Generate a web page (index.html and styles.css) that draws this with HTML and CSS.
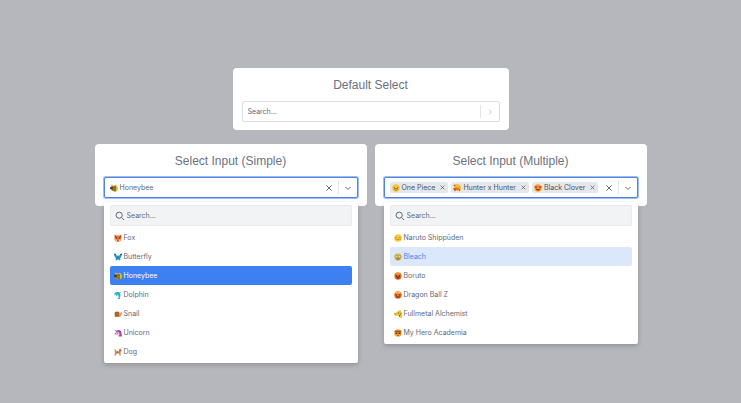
FILE: index.html
```html
<!DOCTYPE html>
<html lang="en">
<head>
  <meta charset="UTF-8">
  <meta name="viewport" content="width=device-width, initial-scale=1.0">
  <title>Select Inputs</title>
  <link rel="stylesheet" href="styles.css">
</head>
<body>
  <!-- Icons -->
  <svg class="sprite" aria-hidden="true">
    <symbol id="chevron" viewBox="0 0 10 10"><path d="M2.5 4 5 6.5 7.5 4" /></symbol>
    <symbol id="close" viewBox="0 0 10 10"><path d="M2.3 2.3 7.7 7.7M7.7 2.3 2.3 7.7" /></symbol>
    <symbol id="search" viewBox="0 0 10 10"><circle cx="4.2" cy="4.2" r="3.1" /><path d="M6.5 6.5 9 9" /></symbol>

    <symbol id="fox" viewBox="0 0 16 16">
      <path fill="#e8742c" d="M1 1 5 3h6l4-2v8l-1 5-6 2-6-2-1-5z" />
      <path fill="#a9441a" d="M2 3l3 2-3 3zM14 3l-3 2 3 3z" />
      <path fill="#ffd3a2" d="M2 11l4 0 2 3-4 1zM14 11l-4 0-2 3 4 1z" />
      <path fill="#37251f" d="M4 7h2v2H4zM10 7h2v2h-2zM7 12h2v2H7z" />
    </symbol>
    <symbol id="butterfly" viewBox="0 0 16 16">
      <path fill="#1c9fd0" d="M8 8 2 1 0 2l2 7 2 1-1 4 3 1 2-5 2 5 3-1-1-4 2-1 2-7-2-1z" />
      <path fill="#17557a" d="M7 5h2v8H7zM0 2l2-1 2 3-2 1zM16 2l-2-1-2 3 2 1z" />
    </symbol>
    <symbol id="bee" viewBox="0 0 16 16">
      <path fill="#b9b9a5" d="M5 7 1 1l5 1 3 5zM9 6l1-5 4 2-2 4z" />
      <ellipse cx="9" cy="9" rx="7" ry="6" fill="#e2b92c" />
      <path fill="#3c3422" d="M5 5l2-1v10l-2-1zM9 4h2v11H9z" />
      <circle cx="3" cy="8" r="3" fill="#4a3d20" />
    </symbol>
    <symbol id="dolphin" viewBox="0 0 16 16">
      <path fill="#2ab5bb" d="M0 7c2-5 7-6 10-4l4-1-2 3c2 3 1 6-1 8l2 3H7l2-3c1-3 0-4-2-5l-3 3V8z" />
      <path fill="#a5e3df" d="M1 7l5-1-2 2z" />
    </symbol>
    <symbol id="snail" viewBox="0 0 16 16">
      <path fill="#d99b50" d="M1 12h9l2-4-1-5h1l2 4 1-4h1l-1 7-3 4H1z" />
      <circle cx="6" cy="8" r="5" fill="#985526" />
      <circle cx="6" cy="8" r="2.5" fill="none" stroke="#d39255" />
    </symbol>
    <symbol id="unicorn" viewBox="0 0 16 16">
      <path fill="#a747ac" d="M4 4c5-4 11-2 11 4l1 7H9l2-5-6 1z" />
      <path fill="#e3c3e3" d="M5 5l4 1 2 3-1 5H7l1-4-5 2-2-2z" />
      <path fill="#a947ac" d="M0 1l6 3-1 2zM6 7h2v2H6zM1 10l3-3 1 1-3 3z" />
    </symbol>
    <symbol id="dog" viewBox="0 0 16 16">
      <path fill="#cf8b58" d="M1 1l3 3 1 3h5l1-5 2-1 3 4-2 2-1 4 1 4h-3l-1-4H5l-1 4H1l1-6z" />
      <path fill="#7b4526" d="M11 2l2 3-2 2zM5 7h4v2H5z" />
    </symbol>

    <symbol id="smile" viewBox="0 0 16 16">
      <circle cx="8" cy="8" r="7.5" fill="#f9c52e" />
      <path fill="#7c4317" d="M3 6h3v1H3zM10 6h3v1h-3zM4 9h8c0 5-8 5-8 0z" />
      <path fill="#fff" d="M5 10h6v1H5z" />
    </symbol>
    <symbol id="hearts" viewBox="0 0 16 16">
      <circle cx="9" cy="7" r="7" fill="#f9bd30" />
      <path fill="#7c4317" d="M5 6h2v1H5zM11 6h2v1h-2zM6 9h6c-1 3-5 3-6 0z" />
      <path fill="#e93f31" d="M0 9l2-1 2 1 2-1 1 2-3 5zM11 11l3-1 1 2-2 3zM1 2l3-1 1 2-2 2z" />
    </symbol>
    <symbol id="heart-eyes" viewBox="0 0 16 16">
      <circle cx="8" cy="8" r="7.5" fill="#f8a227" />
      <path fill="#dc3426" d="M1 4l3 1 3-1-1 4-2 1-2-2zM9 4l3 1 3-1-1 3-2 2-2-1z" />
      <path fill="#7c3517" d="M4 10h8c-1 4-7 4-8 0z" />
    </symbol>
    <symbol id="calm" viewBox="0 0 16 16">
      <circle cx="8" cy="8" r="7.5" fill="#f8ca36" />
      <path fill="#8b561c" d="M3 6h3v1H3zM10 6h3v1h-3zM6 11h4v1H6z" />
      <path fill="#ed9c28" d="M2 9h3v3H2zM11 9h3v3h-3z" />
    </symbol>
    <symbol id="nerd" viewBox="0 0 16 16">
      <circle cx="8" cy="8" r="7.5" fill="#e9bd43" />
      <g fill="#eee6bd" stroke="#66644a"><circle cx="5" cy="7" r="2.5" /><circle cx="11" cy="7" r="2.5" /></g>
      <path fill="#704a1c" d="M5 11h6v2H5z" />
    </symbol>
    <symbol id="angry" viewBox="0 0 16 16">
      <circle cx="8" cy="8" r="7.5" fill="#f28d2b" />
      <path fill="#d93a24" d="M2 8h12l-2 5-4 2-4-2z" />
      <path fill="#672b18" d="M3 5l4 2-1 2H4zM13 5L9 7l1 2h2zM6 11h4v2H6z" />
    </symbol>
    <symbol id="blown" viewBox="0 0 16 16">
      <circle cx="8" cy="8" r="7.5" fill="#ec6e2a" />
      <path fill="#f7bd3c" d="M2 4l3 2 3-2 3 2 3-2-2-3H4z" />
      <path fill="#6a2418" d="M3 7h3v2H3zM10 7h3v2h-3zM4 11h8v2H4z" />
    </symbol>
    <symbol id="party" viewBox="0 0 16 16">
      <path fill="#edc231" d="M0 6l5-1 4-4h5l2 5v9l-4 1-4-5-5 1z" />
      <path fill="#7c5a1b" d="M8 5h2v2H8zM12 7h2v2h-2zM10 10h2v3h-2z" />
      <path fill="#a9b740" d="M0 7l4-1 1 3-4 1z" />
    </symbol>
    <symbol id="cowboy" viewBox="0 0 16 16">
      <circle cx="8" cy="8" r="7.5" fill="#f5a52e" />
      <path fill="#a64d1e" d="M1 4l4-1 3 1 3-1 4 1-2 2H3z" />
      <path fill="#5e3016" d="M3 7h4v3H3zM9 7h4v3H9zM6 12h4v1H6z" />
    </symbol>
  </svg>

  <main class="demo">
    <section class="card card-default">
      <label class="card-title" for="defaultSelect">Default Select</label>
      <div class="control">
        <select id="defaultSelect" class="native-select">
          <option>Search...</option>
        </select>
        <span class="divider"></span>
        <svg class="icon icon-right"><use href="#chevron" /></svg>
      </div>
    </section>

    <div class="row">
      <section class="card">
        <h2 class="card-title" id="simpleTitle">Select Input (Simple)</h2>
        <div class="select">
          <div class="control focused">
            <div class="value"><svg class="emoji"><use href="#bee" /></svg>Honeybee</div>
            <button class="clear" type="button" aria-label="Clear"><svg class="icon"><use href="#close" /></svg></button>
            <span class="divider"></span>
            <button class="toggle" type="button" aria-label="Toggle options" aria-expanded="true"><svg class="icon"><use href="#chevron" /></svg></button>
          </div>
          <div class="menu">
            <label class="search">
              <svg class="icon"><use href="#search" /></svg>
              <input type="text" placeholder="Search..." aria-label="Search animals">
            </label>
            <ul class="options" role="listbox" aria-labelledby="simpleTitle">
              <li class="option" role="option"><svg class="emoji"><use href="#fox" /></svg>Fox</li>
              <li class="option" role="option"><svg class="emoji"><use href="#butterfly" /></svg>Butterfly</li>
              <li class="option selected" role="option" aria-selected="true"><svg class="emoji"><use href="#bee" /></svg>Honeybee</li>
              <li class="option" role="option"><svg class="emoji"><use href="#dolphin" /></svg>Dolphin</li>
              <li class="option" role="option"><svg class="emoji"><use href="#snail" /></svg>Snail</li>
              <li class="option" role="option"><svg class="emoji"><use href="#unicorn" /></svg>Unicorn</li>
              <li class="option" role="option"><svg class="emoji"><use href="#dog" /></svg>Dog</li>
            </ul>
          </div>
        </div>
      </section>

      <section class="card">
        <h2 class="card-title" id="multipleTitle">Select Input (Multiple)</h2>
        <div class="select">
          <div class="control focused">
            <div class="value">
              <span class="tag"><svg class="emoji"><use href="#smile" /></svg>One Piece<button class="tag-remove" type="button" aria-label="Remove One Piece"><svg class="icon"><use href="#close" /></svg></button></span>
              <span class="tag"><svg class="emoji"><use href="#hearts" /></svg>Hunter x Hunter<button class="tag-remove" type="button" aria-label="Remove Hunter x Hunter"><svg class="icon"><use href="#close" /></svg></button></span>
              <span class="tag"><svg class="emoji"><use href="#heart-eyes" /></svg>Black Clover<button class="tag-remove" type="button" aria-label="Remove Black Clover"><svg class="icon"><use href="#close" /></svg></button></span>
            </div>
            <button class="clear" type="button" aria-label="Clear all"><svg class="icon"><use href="#close" /></svg></button>
            <span class="divider"></span>
            <button class="toggle" type="button" aria-label="Toggle options" aria-expanded="true"><svg class="icon"><use href="#chevron" /></svg></button>
          </div>
          <div class="menu">
            <label class="search">
              <svg class="icon"><use href="#search" /></svg>
              <input type="text" placeholder="Search..." aria-label="Search anime">
            </label>
            <ul class="options" role="listbox" aria-labelledby="multipleTitle" aria-multiselectable="true">
              <li class="option" role="option"><svg class="emoji"><use href="#calm" /></svg>Naruto Shippūden</li>
              <li class="option active" role="option"><svg class="emoji"><use href="#nerd" /></svg>Bleach</li>
              <li class="option" role="option"><svg class="emoji"><use href="#angry" /></svg>Boruto</li>
              <li class="option" role="option"><svg class="emoji"><use href="#blown" /></svg>Dragon Ball Z</li>
              <li class="option" role="option"><svg class="emoji"><use href="#party" /></svg>Fullmetal Alchemist</li>
              <li class="option" role="option"><svg class="emoji"><use href="#cowboy" /></svg>My Hero Academia</li>
            </ul>
          </div>
        </div>
      </section>
    </div>
  </main>
</body>
</html>
```

FILE: styles.css
```css
* {
  box-sizing: border-box;
}

body {
  margin: 0;
  padding: 68px 16px 16px;
  min-height: 100vh;
  background-color: #b6b7bc;
  color: #5f6877;
  font-family: Inter, "Noto Sans", sans-serif;
  font-size: 7px;
  line-height: 11px;
}

.sprite {
  position: absolute;
  width: 0;
  height: 0;
}

.demo {
  display: flex;
  flex-direction: column;
  align-items: center;
  gap: 14px;
  max-width: 552px;
  margin: 0 auto;
}

.row {
  display: flex;
  gap: 8px;
  width: 100%;
}

.card {
  flex: 1;
  min-width: 0;
  padding: 9px 9px 8px;
  background-color: #ffffff;
  border-radius: 4px;
}

.card-default {
  width: 50%;
}

.card-title {
  display: block;
  margin: 0 0 7px;
  color: #6b7280;
  font-family: "Liberation Sans", Arial, sans-serif;
  font-size: 12px;
  font-weight: 400;
  line-height: 17px;
  text-align: center;
}

/* Select box */
.select {
  position: relative;
}

.control {
  display: flex;
  align-items: center;
  height: 21px;
  padding-right: 4px;
  border: 1px solid #dcdee2;
  border-radius: 2px;
  background-color: #ffffff;
}

.control.focused {
  border-color: #5185dc;
  box-shadow: 0 0 0 1px #9dbdf3;
}

.native-select {
  flex: 1;
  height: 100%;
  padding: 0 5px;
  border: none;
  outline: none;
  appearance: none;
  background: none;
  color: inherit;
  font: inherit;
}

.value {
  display: flex;
  flex: 1;
  align-items: center;
  min-width: 0;
  padding-left: 5px;
  white-space: nowrap;
}

.divider {
  width: 1px;
  height: 13px;
  margin: 0 4px;
  background-color: #e2e4e8;
}

button {
  display: flex;
  padding: 0;
  border: none;
  background: none;
  color: inherit;
  cursor: pointer;
}

.icon {
  flex: none;
  width: 10px;
  height: 10px;
  fill: none;
  stroke: currentColor;
  stroke-width: 1;
}

.icon-right {
  color: #cdd0d6;
  transform: rotate(-90deg);
}

.emoji {
  flex: none;
  width: 8px;
  height: 8px;
  margin-right: 2px;
}

/* Selected values */
.tag {
  display: flex;
  align-items: center;
  margin-right: 3px;
  padding: 0 2px;
  background-color: #e5e7eb;
  border-radius: 2px;
  color: #4b5563;
}

.tag-remove {
  margin-left: 4px;
}

.tag-remove .icon {
  width: 7px;
  height: 7px;
}

/* Dropdown */
.menu {
  position: absolute;
  top: 100%;
  left: 0;
  right: 0;
  margin-top: 4px;
  padding: 3px 6px 2px;
  background-color: #ffffff;
  border-radius: 2px;
  box-shadow: 0 2px 5px rgba(0, 0, 0, 0.2);
}

.search {
  display: flex;
  align-items: center;
  gap: 2px;
  height: 21px;
  padding: 0 4px;
  border: 1px solid #e8eaed;
  border-radius: 2px;
  background-color: #f2f3f5;
}

.search input {
  flex: 1;
  min-width: 0;
  padding: 0;
  border: none;
  outline: none;
  background: none;
  color: inherit;
  font: inherit;
}

.search input::placeholder {
  color: #5f6877;
}

.options {
  margin: 0;
  padding: 2px 0 0;
  list-style: none;
}

.option {
  display: flex;
  align-items: center;
  height: 19px;
  padding: 0 4px;
  border-radius: 2px;
  cursor: pointer;
}

.option.selected {
  background-color: #3c80f2;
  color: #ffffff;
}

.option.active {
  background-color: #dbe8fc;
  color: #4386ef;
}
```
